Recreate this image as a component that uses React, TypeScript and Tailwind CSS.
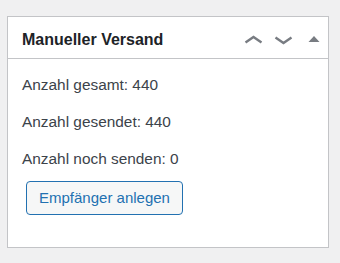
export default function App() {
  return (
    <div
      className="w-[340px] h-[263px] bg-[#f0f0f1] pt-[16px] pl-[7px] overflow-hidden"
      style={{ fontFamily: '"Liberation Sans", Arial, sans-serif' }}
    >
      <div className="w-[322px] border border-[#c3c4c7] bg-white">
        <div className="flex h-[42px] items-center border-b border-[#c3c4c7] pl-[14px]">
          <h2 className="flex-1 pt-[4px] text-[16px] leading-[18px] font-bold text-[#1d2327]">
            Manueller Versand
          </h2>
          <svg width="30" height="20" viewBox="0 0 30 20" className="shrink-0">
            <polyline points="7.5,14.5 15.5,9 23.5,14.5" fill="none" stroke="#787c82" strokeWidth="2.4" />
          </svg>
          <svg width="30" height="20" viewBox="0 0 30 20" className="shrink-0">
            <polyline points="7.5,9.5 15.5,15 23.5,9.5" fill="none" stroke="#787c82" strokeWidth="2.4" />
          </svg>
          <svg width="30" height="20" viewBox="0 0 30 20" className="shrink-0">
            <polygon points="10.5,14 16,8 21.5,14" fill="#787c82" />
          </svg>
        </div>
        <div className="px-[14px] pt-[15px] pb-[32px] text-[15.4px] leading-[22px] text-[#3c434a]">
          <p className="mb-[15px]">Anzahl gesamt: 440</p>
          <p className="mb-[15px]">Anzahl gesendet: 440</p>
          <p className="mb-[11px]">Anzahl noch senden: 0</p>
          <button className="ml-[4px] h-[34px] rounded-[4px] border border-[#2271b1] bg-[#f6f7f7] px-[12px] text-[15px] leading-[32px] text-[#2271b1]">
            Empfänger anlegen
          </button>
        </div>
      </div>
    </div>
  );
}
